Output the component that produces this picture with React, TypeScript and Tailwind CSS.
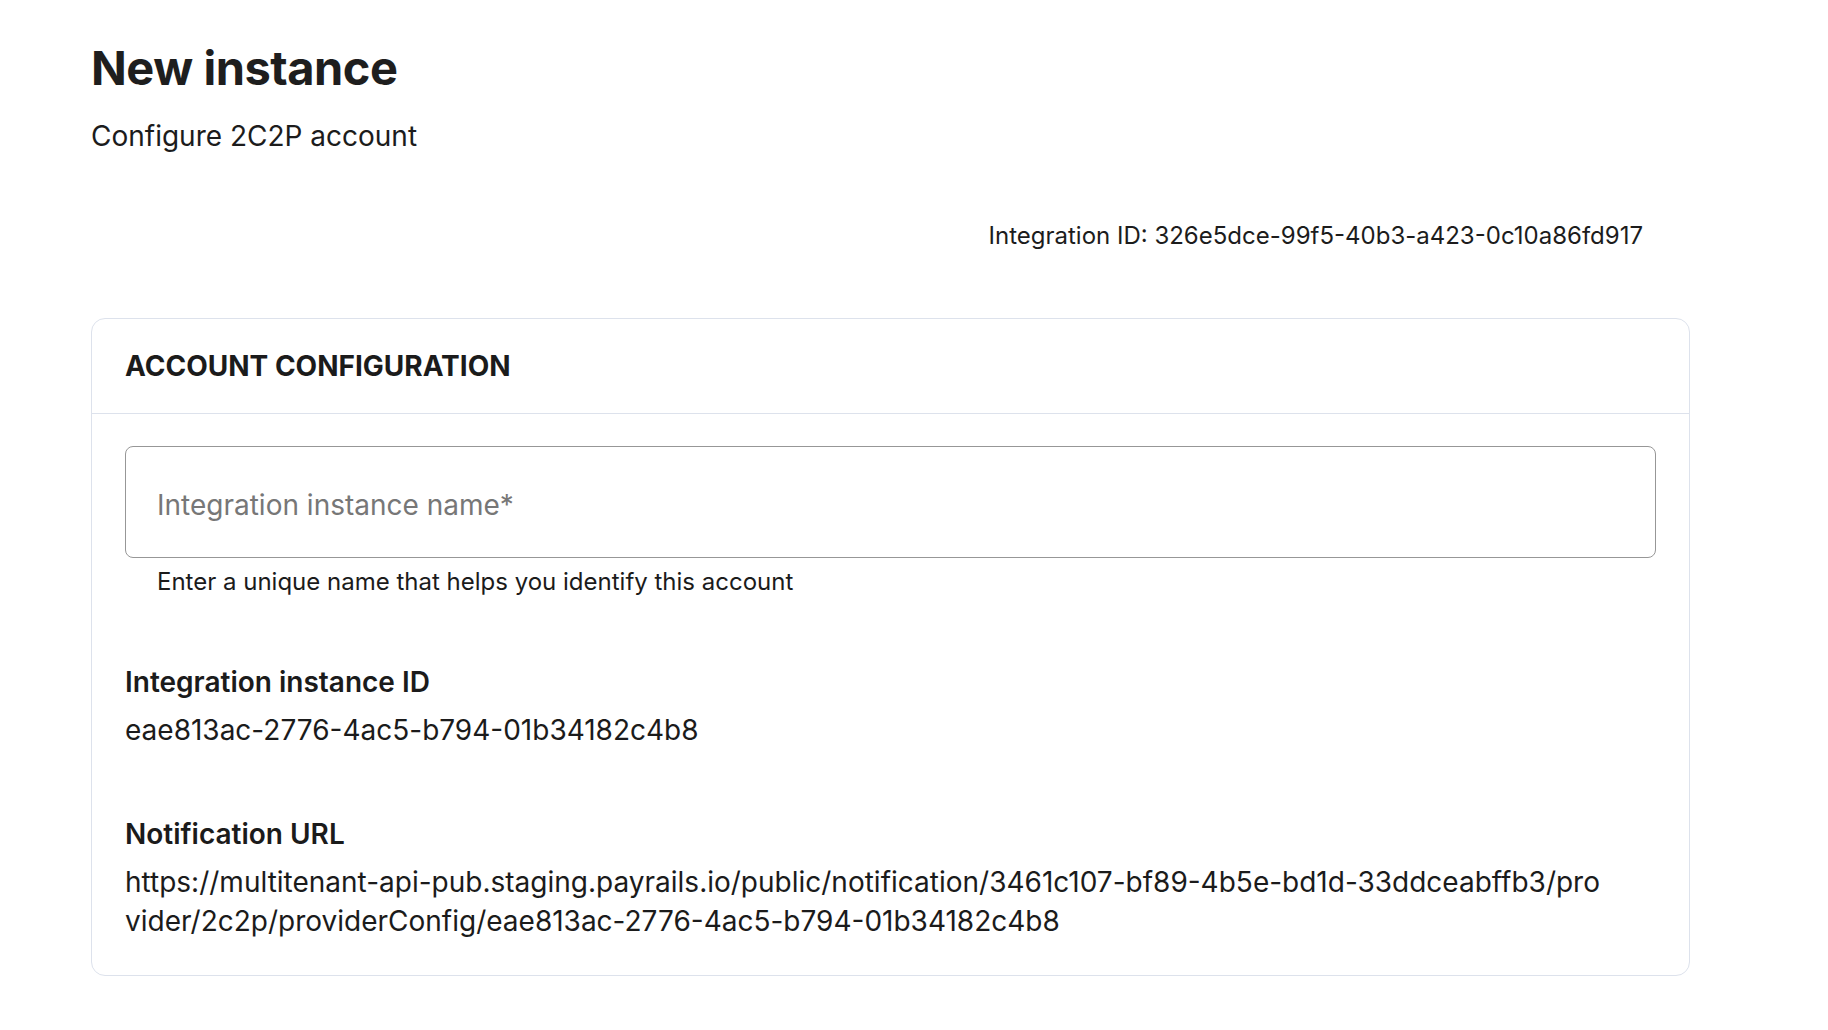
const instanceId = 'eae813ac-2776-4ac5-b794-01b34182c4b8'
const notificationUrl =
  'https://multitenant-api-pub.staging.payrails.io/public/notification/3461c107-bf89-4b5e-bd1d-33ddceabffb3/provider/2c2p/providerConfig/' +
  instanceId

function Field({ label, value }: { label: string; value: string }) {
  return (
    <div>
      <div className="text-[28px] font-semibold leading-[39.5px] text-[#1b1b1b]">{label}</div>
      <div className="mt-2 max-w-[1490px] break-all text-[28px] leading-[39.5px] text-[#1b1b1b]">{value}</div>
    </div>
  )
}

export default function App() {
  return (
    <div className="min-h-screen bg-white font-['Inter','Noto_Sans',sans-serif] text-[#1c1c1c]">
      <div className="ml-[91px] w-[1599px] pt-[40px]">
        <h1 className="text-[47px] font-bold leading-[1.2] tracking-[-0.01em] text-[#1e1e1e]">New instance</h1>
        <p className="mt-[20px] text-[28px] leading-[40px]">Configure 2C2P account</p>

        <div className="mt-[62px] flex justify-end pr-[47px]">
          <span className="text-[24px] leading-[1.5]">Integration ID: 326e5dce-99f5-40b3-a423-0c10a86fd917</span>
        </div>

        <section className="mt-16 rounded-[14px] border-[1.5px] border-[#dde2ec]">
          <div className="flex h-[95px] items-center border-b-[1.5px] border-[#dde2ec] px-[33px]">
            <h2 className="text-[28px] font-bold uppercase leading-none text-[#1b1b1b]">Account configuration</h2>
          </div>

          <div className="px-[33px] pb-[33px] pt-[32px]">
            <input
              type="text"
              placeholder="Integration instance name*"
              className="h-[112px] w-full rounded-[8px] border-[1.5px] border-[#979797] px-[31px] pt-[6px] text-[28px] text-[#1b1b1b] outline-none placeholder:text-[#777777]"
            />
            <p className="mt-[7px] pl-[32px] text-[24px] leading-[34px] text-[#1b1b1b]">
              Enter a unique name that helps you identify this account
            </p>

            <div className="mt-[64px]">
              <Field label="Integration instance ID" value={instanceId} />
            </div>
            <div className="mt-[65px]">
              <Field label="Notification URL" value={notificationUrl} />
            </div>
          </div>
        </section>
      </div>
    </div>
  )
}
